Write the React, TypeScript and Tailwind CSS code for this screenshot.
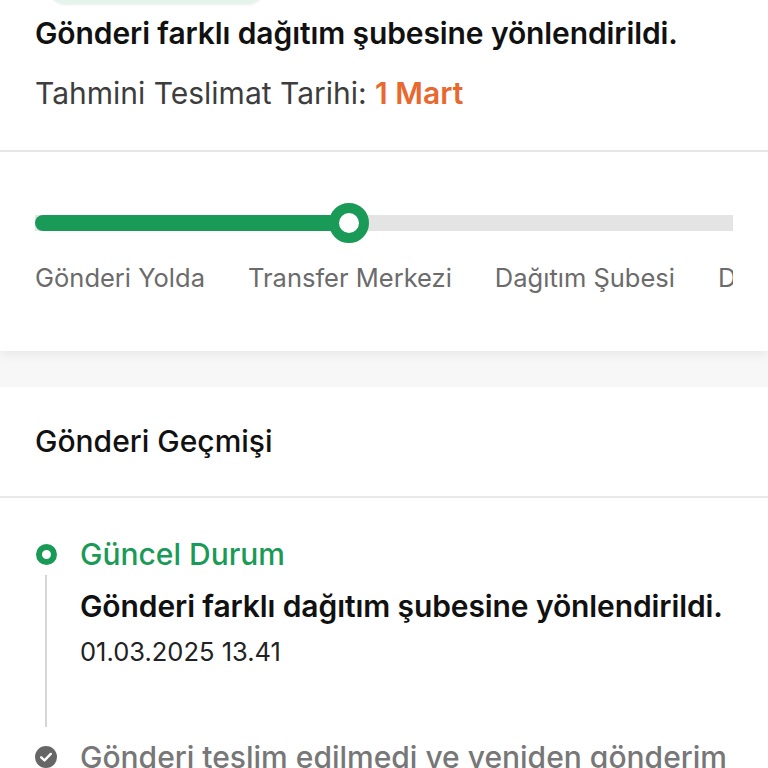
import React from "react";

const labels = ["Gönderi Yolda", "Transfer Merkezi", "Dağıtım Şubesi", "Dağıtımda", "Teslim Edildi"];

export default function App() {
  return (
    <div className="w-[768px] h-[768px] overflow-hidden bg-[#f7f7f7]" style={{ fontFamily: "Inter, 'Noto Sans', sans-serif" }}>
      {/* Summary */}
      <div className="bg-white">
        <div className="px-[35px]">
          <div className="ml-[13px] -mt-[32px] h-[36px] w-[217px] rounded-full bg-[#e4f4ec] shadow-[0_1px_3px_rgba(0,0,0,0.08)]" />
          <div className="mt-[11px] text-[30px] leading-[36px] font-semibold text-[#111] whitespace-nowrap tracking-[-0.1px]">
            Gönderi farklı dağıtım şubesine yönlendirildi.
          </div>
          <div className="mt-[24px] pb-[39px] text-[30px] leading-[36px] text-[#3d3d3d]">
            Tahmini Teslimat Tarihi: <span className="font-semibold text-[#e8692f]">1 Mart</span>
          </div>
        </div>
        <div className="h-[2px] bg-[#e8e8e8]" />
      </div>

      {/* Progress */}
      <div className="relative z-10 bg-white shadow-[0_4px_10px_rgba(0,0,0,0.06)]">
        <div className="mx-[35px] overflow-hidden pt-[51px] pb-[57px]">
          <div className="relative flex h-[40px] items-center">
            <div className="h-[16px] w-full bg-[#e4e4e4]" />
            <div className="absolute left-0 top-[12px] h-[16px] w-[315px] rounded-l-full bg-[#1a9a57]" />
            <div className="absolute left-[294px] top-0 h-[40px] w-[40px] rounded-full border-[10px] border-[#1a9a57] bg-white" />
          </div>
          <div className="mt-[19px] flex gap-[43px] whitespace-nowrap text-[25.5px] leading-[32px] text-[#6b6b6b]">
            {labels.map((l) => (
              <span key={l}>{l}</span>
            ))}
          </div>
        </div>
      </div>

      <div className="h-[36px]" />

      {/* History */}
      <div className="bg-white">
        <div className="px-[35px] pt-[36px] pb-[37px] text-[30px] leading-[36px] font-medium text-[#111]">
          Gönderi Geçmişi
        </div>
        <div className="h-[2px] bg-[#e8e8e8]" />
        <div className="px-[35px] pt-[38px]">
          {/* Item 1 */}
          <div className="flex gap-[23px]">
            <div className="flex w-[22px] flex-col items-center">
              <div className="mt-[8px] h-[21px] w-[21px] shrink-0 rounded-full border-[6px] border-[#1a9a57] bg-white" />
              <div className="mt-[10px] w-[2px] flex-1 bg-[#d6d6d6]" />
            </div>
            <div className="pb-[60px]">
              <div className="text-[30px] leading-[36px] font-medium text-[#1a9a57]">Güncel Durum</div>
              <div className="mt-[16px] text-[30px] leading-[36px] font-semibold text-[#111] whitespace-nowrap tracking-[-0.1px]">
                Gönderi farklı dağıtım şubesine yönlendirildi.
              </div>
              <div className="mt-[13px] text-[25.5px] leading-[30px] text-[#222]">01.03.2025 13.41</div>
            </div>
          </div>
          {/* Item 2 */}
          <div className="mt-[12px] flex gap-[23px]">
            <div className="flex w-[22px] flex-col items-center">
              <svg className="mt-[7px] shrink-0" width="22" height="22" viewBox="0 0 22 22">
                <circle cx="11" cy="11" r="11" fill="#666666" />
                <path d="M6.2 11.3 L9.5 14.4 L15.8 7.9" fill="none" stroke="#ffffff" strokeWidth="2.4" strokeLinecap="round" strokeLinejoin="round" />
              </svg>
            </div>
            <div className="text-[30px] leading-[36px] font-medium text-[#777] whitespace-nowrap">
              Gönderi teslim edilmedi ve yeniden gönderim
            </div>
          </div>
        </div>
      </div>
    </div>
  );
}
